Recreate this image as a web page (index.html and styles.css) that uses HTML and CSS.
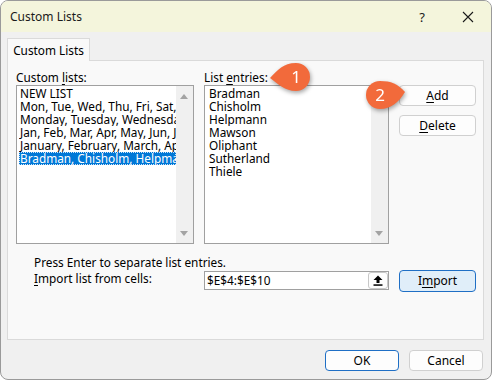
FILE: index.html
```html
<!DOCTYPE html>
<html>
<head>
<meta charset="utf-8">
<link rel="stylesheet" href="styles.css">
</head>
<body>
<div class="window">
  <div class="titlebar">
    <span class="title">Custom Lists</span>
    <span class="tb-btn help">?</span>
    <span class="tb-btn close">
      <svg width="12" height="12" viewBox="0 0 12 12"><path d="M1 1L11 11M11 1L1 11" stroke="#1a1a1a" stroke-width="1.1" fill="none"/></svg>
    </span>
  </div>
  <div class="content">
    <div class="tabs"><div class="tab">Custom Lists</div></div>
    <div class="panel">
      <div class="grid">
        <div class="label">Custom <u>l</u>ists:</div>
        <div class="label">List <u>e</u>ntries:</div>
        <div></div>

        <div class="listbox">
          <div class="items">
            <div class="item">NEW LIST</div>
            <div class="item">Mon, Tue, Wed, Thu, Fri, Sat, Sun</div>
            <div class="item">Monday, Tuesday, Wednesday, Thursday</div>
            <div class="item">Jan, Feb, Mar, Apr, May, Jun, Jul</div>
            <div class="item">January, February, March, April</div>
            <div class="item selected">Bradman, Chisholm, Helpmann</div>
          </div>
          <div class="scrollbar"><span class="arr up"></span><span class="arr down"></span></div>
        </div>
        <div class="listbox">
          <div class="items entries">
            <div class="item">Bradman</div>
            <div class="item">Chisholm</div>
            <div class="item">Helpmann</div>
            <div class="item">Mawson</div>
            <div class="item">Oliphant</div>
            <div class="item">Sutherland</div>
            <div class="item">Thiele</div>
          </div>
          <div class="scrollbar"><span class="arr down"></span></div>
        </div>
        <div class="btncol">
          <button class="btn"><u>A</u>dd</button>
          <button class="btn"><u>D</u>elete</button>
        </div>

        <div class="hint">Press Enter to separate list entries.</div>

        <div class="label indent import-label"><u>I</u>mport list from cells:</div>
        <div class="input">
          <span class="val">$E$4:$E$10</span>
          <span class="pick">
            <svg width="10" height="11" viewBox="0 0 10 11"><path d="M5 0.5L9.5 5H6.5V8H3.5V5H0.5Z" fill="#000"/><rect x="0.5" y="9.3" width="9" height="1.5" fill="#000"/></svg>
          </span>
        </div>
        <div class="btncol2"><button class="btn primary-light">I<u>m</u>port</button></div>
      </div>
    </div>
    <div class="footer">
      <button class="btn ok">OK</button>
      <button class="btn">Cancel</button>
    </div>
  </div>

  <div class="callout c1">
    <svg width="48" height="36" viewBox="0 0 48 36"><path d="M4 18 C 12 10, 17 3, 30 3 A14 14 0 1 1 30 31 C 19 31, 12 24, 4 18 Z" fill="#f26a3b"/></svg>
    <span class="num n1">1</span>
  </div>
  <div class="callout c2">
    <svg width="48" height="36" viewBox="0 0 48 36"><path d="M43 14 C 36 6, 29 3, 18 3 A14 14 0 1 0 18 31 C 29 31, 37 24, 43 14 Z" fill="#f26a3b"/></svg>
    <span class="num n2">2</span>
  </div>
</div>
</body>
</html>
```

FILE: styles.css
```css
* { box-sizing: border-box; }
html, body { margin: 0; padding: 0; }
body {
  width: 492px;
  height: 380px;
  font-family: "Noto Sans", "DejaVu Sans", sans-serif;
  font-size: 11.8px;
  color: #000;
  background: #fff;
}
u { text-decoration-thickness: 1px; text-underline-offset: 2px; }

.window {
  position: relative;
  width: 492px;
  height: 380px;
  border: 1px solid #9a9a9a;
  border-radius: 8px;
  background: #f0f0f0;
  overflow: hidden;
  display: flex;
  flex-direction: column;
}

.titlebar {
  height: 31px;
  background: #f4f5dc;
  display: flex;
  align-items: center;
  padding-left: 9px;
  flex: none;
}
.title { flex: 1; color: #1a1a1a; font-size: 12px; }
.tb-btn {
  width: 46px;
  height: 31px;
  display: flex;
  align-items: center;
  justify-content: center;
  color: #1a1a1a;
}
.help { font-size: 13px; }

.content {
  flex: 1;
  display: flex;
  flex-direction: column;
  padding: 6px 7px 0 6px;
}
.tabs { display: flex; height: 22px; }
.tab {
  width: 83px;
  height: 23px;
  border: 1px solid #dadada;
  border-bottom: none;
  background: #f9f9f9;
  display: flex;
  align-items: center;
  justify-content: center;
  position: relative;
  z-index: 1;
}
.panel {
  height: 280px;
  border: 1px solid #dadada;
  background: #f9f9f9;
  padding: 8px 0 0 8px;
}
.grid {
  display: grid;
  grid-template-columns: 178px 185px 77px;
  grid-template-rows: 16px 159px 25px 22px;
  column-gap: 10px;
  row-gap: 0;
}
.label { line-height: 16px; white-space: nowrap; }

.listbox {
  border: 1px solid #a0a0a0;
  background: #fff;
  display: flex;
  overflow: hidden;
}
.items { flex: 1; padding: 1px 0 0 2px; min-width: 0; overflow: hidden; }
.entries { padding-left: 3px; }
.item {
  height: 13px;
  line-height: 13px;
  white-space: nowrap;
  overflow: hidden;
  padding-left: 1px;
}
.selected {
  background: #0078d7;
  color: #fff;
  outline: 1px dotted #cfe3f7;
  outline-offset: -1px;
}
.scrollbar {
  width: 17px;
  flex: none;
  background: #f0f0f0;
  position: relative;
}
.arr {
  position: absolute;
  left: 4px;
  width: 0;
  height: 0;
  border-left: 4.5px solid transparent;
  border-right: 4.5px solid transparent;
}
.arr.up { top: 8px; border-bottom: 5px solid #a3a3a3; }
.arr.down { bottom: 7px; border-top: 5px solid #a3a3a3; }

.btncol { display: flex; flex-direction: column; gap: 9px; }
.btn {
  font-family: inherit;
  font-size: 12px;
  color: #000;
  height: 21px;
  width: 77px;
  border: 1px solid #d0d0d0;
  border-radius: 4px;
  background: #fdfdfd;
  padding: 0;
  line-height: 18px;
}

.hint {
  grid-column: 1 / -1;
  padding-left: 18px;
  line-height: 16px;
  padding-top: 10px;
}
.indent { padding-left: 18px; }
.import-label { padding-top: 1px; }
.input {
  height: 19px;
  margin-top: 2px;
  border: 1px solid #a0a0a0;
  background: #fff;
  display: flex;
  align-items: center;
  justify-content: space-between;
  padding: 0 0 0 2px;
}
.val { line-height: 17px; }
.pick {
  width: 20px;
  height: 17px;
  border: 1px solid #c8c8c8;
  border-radius: 3px;
  background: #fdfdfd;
  display: flex;
  align-items: center;
  justify-content: center;
}
.btncol2 { padding-top: 1px; }
.primary-light {
  height: 22px;
  background: #e0eef9;
  border-color: #1f6fc5;
}

.footer {
  display: flex;
  justify-content: flex-end;
  gap: 10px;
  padding-top: 10px;
  padding-right: 1px;
}
.footer .btn { width: 74px; }
.ok { border-color: #1f6fc5; }

.callout {
  position: absolute;
  width: 48px;
  height: 36px;
  filter: drop-shadow(1px 2px 2px rgba(0,0,0,0.35));
}
.callout svg { display: block; }
.c1 { left: 265px; top: 59px; }
.c2 { left: 361px; top: 77px; }
.num {
  position: absolute;
  top: 3px;
  width: 28px;
  height: 28px;
  line-height: 28px;
  text-align: center;
  color: #fff;
  font-size: 17px;
}
.n1 { left: 16px; }
.n2 { left: 4px; }
```
